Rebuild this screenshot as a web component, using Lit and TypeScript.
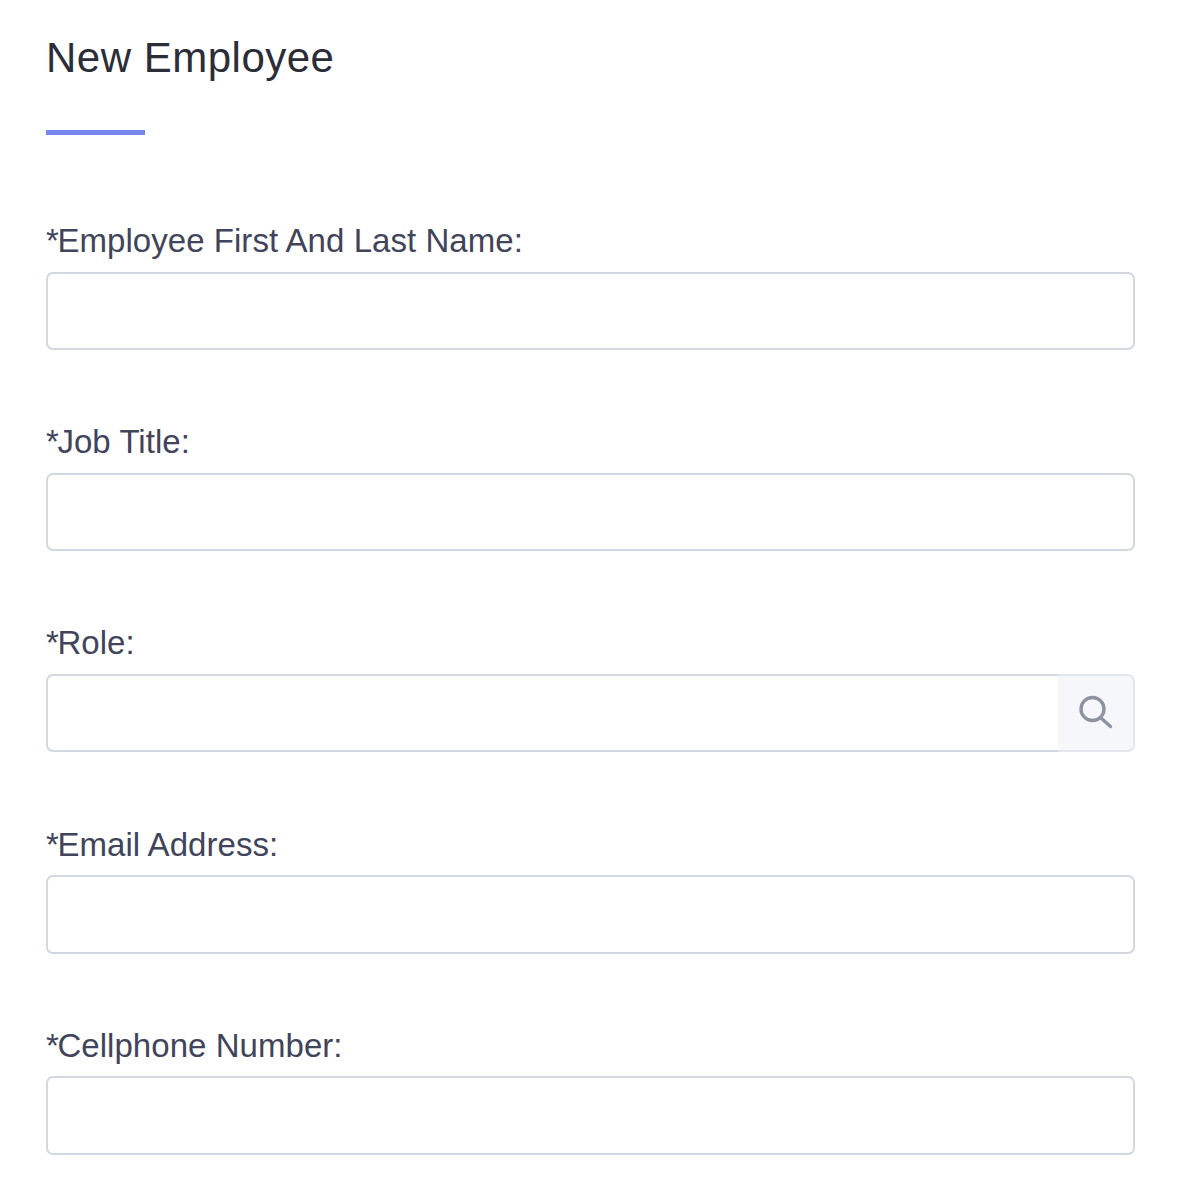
import { LitElement, html, css } from 'lit';
import { customElement } from 'lit/decorators.js';

const FIELDS = [
  { label: 'Employee First And Last Name:' },
  { label: 'Job Title:' },
  { label: 'Role:', search: true },
  { label: 'Email Address:' },
  { label: 'Cellphone Number:' },
];

@customElement('app-root')
export class AppRoot extends LitElement {
  static styles = css`
    :host {
      display: block;
      height: 1200px;
      overflow: hidden;
      background: #fff;
      font-family: 'Liberation Sans', Arial, sans-serif;
    }
    .page {
      padding: 33px 42px 0 46px;
    }
    h1 {
      margin: 0;
      font-size: 42px;
      line-height: 50px;
      font-weight: 400;
      letter-spacing: 0.5px;
      color: #2b2d38;
    }
    .rule {
      width: 99px;
      height: 5px;
      margin-top: 47px;
      background: #7688ef;
    }
    .fields {
      display: flex;
      flex-direction: column;
      gap: 72.2px;
      margin-top: 86.1px;
    }
    label {
      display: block;
      font-size: 33px;
      line-height: 40px;
      letter-spacing: 0.05px;
      color: #41445a;
      margin-bottom: 10.7px;
    }
    .star {
      margin-right: -1.5px;
    }
    .box {
      display: flex;
      height: 78.3px;
    }
    .box input {
      flex: 1;
      min-width: 0;
      box-sizing: border-box;
      border: 2px solid #d3d7df;
      border-radius: 7px;
      outline: 0;
      padding: 0 16px;
      background: #fff;
    }
    .box input.joined {
      border-right: 0;
      border-radius: 7px 0 0 7px;
    }
    .addon {
      width: 77px;
      box-sizing: border-box;
      display: flex;
      align-items: center;
      justify-content: center;
      padding-left: 2px;
      background: #f6f7fa;
      border: 2px solid #e3e5ec;
      border-left: 0;
      border-radius: 0 7px 7px 0;
    }
    .addon svg {
      width: 36px;
      height: 36px;
      fill: none;
      stroke: #8e93a3;
      stroke-width: 3.4;
      stroke-linecap: round;
    }
  `;

  render() {
    return html`
      <div class="page">
        <h1>New Employee</h1>
        <div class="rule"></div>
        <div class="fields">
          ${FIELDS.map(
            (f) => html`
              <div>
                <label><span class="star">*</span>${f.label}</label>
                <div class="box">
                  <input type="text" class=${f.search ? 'joined' : ''} />
                  ${f.search
                    ? html`<div class="addon">
                        <svg viewBox="0 0 36 36">
                          <circle cx="13.5" cy="14" r="11.5" />
                          <path d="M22 23 31.5 31.5" />
                        </svg>
                      </div>`
                    : ''}
                </div>
              </div>
            `
          )}
        </div>
      </div>
    `;
  }
}
